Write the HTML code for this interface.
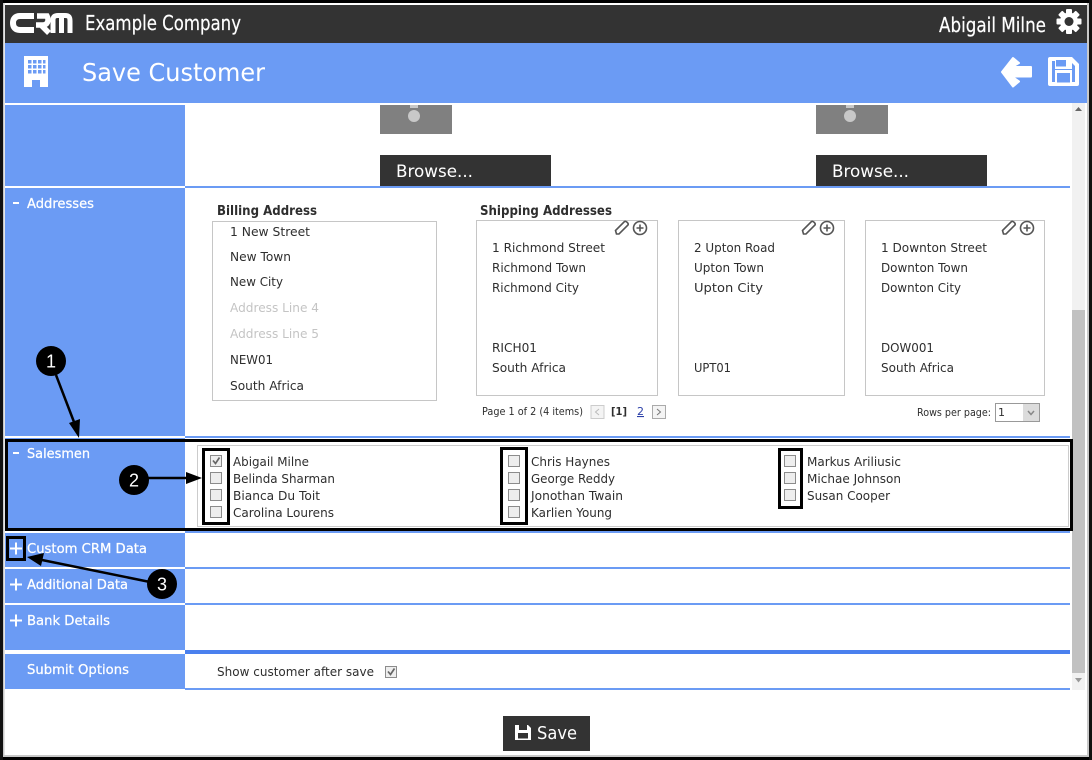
<!DOCTYPE html>
<html lang="en"><head><meta charset="utf-8"><title>Save Customer</title>
<style>
html,body{margin:0;padding:0;background:#fff;width:1092px;height:760px;overflow:hidden}
svg{position:absolute;left:0;top:0;display:block}
text{font-family:"DejaVu Sans","Liberation Sans",sans-serif;font-size:12px;fill:#2e2e2e}
.s text{fill:#fff;font-size:13px;stroke:#fff;stroke-width:.25px}
</style></head><body>
<svg width="1092" height="760" viewBox="0 0 1092 760" xmlns="http://www.w3.org/2000/svg">
<!-- frame -->
<rect width="1092" height="760" fill="#fff"/>
<rect x="0" y="0" width="1092" height="3" fill="#000"/>
<rect x="0" y="757" width="1092" height="3" fill="#000"/>
<rect x="0" y="0" width="3" height="760" fill="#111"/>
<rect x="3" y="3" width="1.500" height="754" fill="#c8c8c8"/>
<rect x="1089" y="0" width="3" height="760" fill="#111"/>
<rect x="1087" y="3" width="2" height="754" fill="#c8c8c8"/>
<rect x="3" y="755" width="1086" height="2" fill="#c8c8c8"/>
<!-- header -->
<rect x="5" y="5" width="1082" height="38" fill="#333"/>
<rect x="5" y="43" width="1082" height="60" fill="#6b9bf4"/>
<g fill="none" stroke="#fff" stroke-width="6">
<path d="M34 16H20C15 16 13 19 13 23C13 27 15 30 20 30H34"/>
<path d="M37 16H47C49.500 21 47 25 43 25H36M41 25L49 33" stroke-width="5.500"/>
<path d="M53 33V20C53 16.500 55 15.500 58 15.500H65C69 15.500 70 17 70 21V33M61.500 16V33" stroke-width="5"/>
</g>
<text x="85" y="30" style="font-size:20.500px;fill:#fff;stroke:#fff;stroke-width:.2px" textLength="156" lengthAdjust="spacingAndGlyphs">Example Company</text>
<text x="939" y="32" style="font-size:20.500px;fill:#fff;stroke:#fff;stroke-width:.2px" textLength="107" lengthAdjust="spacingAndGlyphs">Abigail Milne</text>
<!-- gear -->
<g transform="translate(1069 21.500)" fill="#fff">
<circle r="9"/>
<rect x="-3" y="-12.500" width="6" height="25" rx="1"/>
<rect x="-3" y="-12.500" width="6" height="25" rx="1" transform="rotate(45)"/>
<rect x="-3" y="-12.500" width="6" height="25" rx="1" transform="rotate(90)"/>
<rect x="-3" y="-12.500" width="6" height="25" rx="1" transform="rotate(135)"/>
<circle r="4.500" fill="#333"/>
</g>
<!-- building -->
<path fill="#fff" d="M24 56H48V87H40V80H32V87H24Z"/>
<g fill="#6b9bf4">
<rect x="28" y="60" width="3.500" height="3.500"/><rect x="33" y="60" width="3.500" height="3.500"/><rect x="38" y="60" width="3.500" height="3.500"/><rect x="43" y="60" width="2.500" height="3.500"/>
<rect x="28" y="65" width="3.500" height="3.500"/><rect x="33" y="65" width="3.500" height="3.500"/><rect x="38" y="65" width="3.500" height="3.500"/><rect x="43" y="65" width="2.500" height="3.500"/>
<rect x="28" y="70" width="3.500" height="3.500"/><rect x="33" y="70" width="3.500" height="3.500"/><rect x="38" y="70" width="3.500" height="3.500"/><rect x="43" y="70" width="2.500" height="3.500"/>
</g>
<text x="82" y="81" style="font-size:25px;fill:#fff" textLength="183" lengthAdjust="spacingAndGlyphs">Save Customer</text>
<!-- back arrow -->
<path fill="#fff" stroke="#fff" stroke-width="2" stroke-linejoin="round" d="M1002 72L1013 58L1019 63L1012 67H1031V76.500H1012L1019 81.500L1013 86.500Z"/>
<!-- save icon -->
<path fill="#fff" d="M1050 57H1072L1079 64V84Q1079 86 1077 86H1050Q1048 86 1048 84V59Q1048 57 1050 57Z"/>
<path fill="#6b9bf4" d="M1052 61H1070L1075 66V82H1052Z"/>
<path fill="#fff" d="M1055 57H1072V69H1055Z"/>
<path fill="#6b9bf4" d="M1056 60H1066V66.500H1056Z"/>
<rect x="1055" y="70" width="17" height="16" fill="#fff"/>
<rect x="1057" y="73" width="13" height="9.500" fill="#6b9bf4"/>
<!-- sidebar -->
<g fill="#6b9bf4">
<rect x="5" y="105" width="180" height="81"/>
<rect x="5" y="188" width="180" height="248"/>
<rect x="5" y="438" width="180" height="93"/>
<rect x="5" y="533" width="180" height="34"/>
<rect x="5" y="569" width="180" height="34"/>
<rect x="5" y="605" width="180" height="45"/>
<rect x="5" y="654" width="180" height="35"/>
<rect x="185" y="186" width="885" height="2"/>
<rect x="185" y="436" width="885" height="2"/>
<rect x="185" y="531" width="885" height="2"/>
<rect x="185" y="567" width="885" height="2"/>
<rect x="185" y="603" width="885" height="2"/>
<rect x="185" y="688" width="885" height="2"/>
</g>
<rect x="185" y="650" width="885" height="4" fill="#4a80ee"/>
<!-- scrollbar -->
<rect x="1072" y="103" width="13" height="587" fill="#f1f1f1"/>
<rect x="1072" y="310" width="13" height="363" fill="#c1c1c1"/>
<path d="M1075 111L1078.500 107L1082 111Z" fill="#666"/>
<path d="M1075 678L1078.500 682.500L1082 678Z" fill="#999"/>
<!-- sidebar text -->
<g class="s">
<text x="27" y="208" textLength="67" lengthAdjust="spacingAndGlyphs">Addresses</text>
<text x="27" y="458" textLength="63" lengthAdjust="spacingAndGlyphs">Salesmen</text>
<text x="27" y="553" textLength="120" lengthAdjust="spacingAndGlyphs">Custom CRM Data</text>
<text x="27" y="589" textLength="101" lengthAdjust="spacingAndGlyphs">Additional Data</text>
<text x="27" y="625" textLength="83" lengthAdjust="spacingAndGlyphs">Bank Details</text>
<text x="27" y="674" textLength="102" lengthAdjust="spacingAndGlyphs">Submit Options</text>
</g>
<g fill="#fff">
<rect x="13" y="202" width="6" height="2"/><rect x="13" y="452" width="6" height="2"/>
<path d="M15 542.500h2v5h5v2h-5v5h-2v-5h-5v-2h5z"/>
<path d="M15 578.500h2v5h5v2h-5v5h-2v-5h-5v-2h5z"/>
<path d="M15 614.500h2v5h5v2h-5v5h-2v-5h-5v-2h5z"/>
</g>
<!-- photo placeholders -->
<g fill="#808080"><rect x="380" y="105" width="72" height="29"/><rect x="816" y="105" width="72" height="29"/></g>
<g fill="#c8c8c8"><circle cx="414" cy="116" r="6"/><rect x="410" y="105" width="8" height="3"/><circle cx="850" cy="116" r="6"/><rect x="846" y="105" width="8" height="3"/></g>
<g fill="#333"><rect x="380" y="155" width="171" height="31"/><rect x="816" y="155" width="171" height="31"/></g>
<text x="396" y="177" style="font-size:17px;fill:#fff" textLength="77" lengthAdjust="spacingAndGlyphs">Browse...</text>
<text x="832" y="177" style="font-size:17px;fill:#fff" textLength="77" lengthAdjust="spacingAndGlyphs">Browse...</text>
<!-- addresses -->
<text x="217" y="215" style="font-weight:bold;font-size:13px" textLength="100" lengthAdjust="spacingAndGlyphs">Billing Address</text>
<text x="480" y="215" style="font-weight:bold;font-size:13px" textLength="132" lengthAdjust="spacingAndGlyphs">Shipping Addresses</text>
<g fill="#fff" stroke="#c6c6c6">
<rect x="212.500" y="221.500" width="224" height="179"/>
<rect x="476.500" y="220.500" width="181" height="175"/>
<rect x="678.500" y="220.500" width="166" height="175"/>
<rect x="865.500" y="220.500" width="179" height="175"/>
</g>
<text x="230" y="236" textLength="80" lengthAdjust="spacingAndGlyphs">1 New Street</text>
<text x="230" y="261" textLength="61" lengthAdjust="spacingAndGlyphs">New Town</text>
<text x="230" y="286" textLength="53" lengthAdjust="spacingAndGlyphs">New City</text>
<text x="230" y="312" style="fill:#c4c4c4" textLength="89" lengthAdjust="spacingAndGlyphs">Address Line 4</text>
<text x="230" y="338" style="fill:#c4c4c4" textLength="89" lengthAdjust="spacingAndGlyphs">Address Line 5</text>
<text x="230" y="364" textLength="43" lengthAdjust="spacingAndGlyphs">NEW01</text>
<text x="230" y="390" textLength="74" lengthAdjust="spacingAndGlyphs">South Africa</text>

<text x="492" y="252" textLength="113" lengthAdjust="spacingAndGlyphs">1 Richmond Street</text>
<text x="492" y="272" textLength="94" lengthAdjust="spacingAndGlyphs">Richmond Town</text>
<text x="492" y="292" textLength="87" lengthAdjust="spacingAndGlyphs">Richmond City</text>
<text x="492" y="352" textLength="45" lengthAdjust="spacingAndGlyphs">RICH01</text>
<text x="492" y="372" textLength="74" lengthAdjust="spacingAndGlyphs">South Africa</text>

<text x="694" y="252" textLength="81" lengthAdjust="spacingAndGlyphs">2 Upton Road</text>
<text x="694" y="272" textLength="70" lengthAdjust="spacingAndGlyphs">Upton Town</text>
<text x="694" y="292" textLength="69" lengthAdjust="spacingAndGlyphs">Upton City</text>
<text x="694" y="372" textLength="37" lengthAdjust="spacingAndGlyphs">UPT01</text>

<text x="881" y="252" textLength="106" lengthAdjust="spacingAndGlyphs">1 Downton Street</text>
<text x="881" y="272" textLength="87" lengthAdjust="spacingAndGlyphs">Downton Town</text>
<text x="881" y="292" textLength="80" lengthAdjust="spacingAndGlyphs">Downton City</text>
<text x="881" y="352" textLength="53" lengthAdjust="spacingAndGlyphs">DOW001</text>
<text x="881" y="372" textLength="73" lengthAdjust="spacingAndGlyphs">South Africa</text>

<!-- edit / add icons -->
<g fill="none" stroke="#555" stroke-width="1.600">
<path d="M616.500 234L615.500 230.500L624.500 221.500C626 220.500 629 223.500 628 225L619 234Z"/>
<circle cx="640" cy="228" r="6.500"/><path d="M640 224.500V231.500M636.500 228H643.500"/>
<path d="M803.500 234L802.500 230.500L811.500 221.500C813 220.500 816 223.500 815 225L806 234Z"/>
<circle cx="827" cy="228" r="6.500"/><path d="M827 224.500V231.500M823.500 228H830.500"/>
<path d="M1003.500 234L1002.500 230.500L1011.500 221.500C1013 220.500 1016 223.500 1015 225L1006 234Z"/>
<circle cx="1027" cy="228" r="6.500"/><path d="M1027 224.500V231.500M1023.500 228H1030.500"/>
</g>
<!-- pager -->
<text x="482" y="415" style="font-size:11px" textLength="101" lengthAdjust="spacingAndGlyphs">Page 1 of 2 (4 items)</text>
<rect x="591" y="405.500" width="13" height="13" fill="#f4f4f4" stroke="#ccc"/>
<path d="M599 409L595.500 412L599 415" fill="none" stroke="#bbb"/>
<text x="611" y="415" style="font-size:11px;font-weight:bold" textLength="16" lengthAdjust="spacingAndGlyphs">[1]</text>
<text x="637" y="415" style="font-size:11px;fill:#2b3fa8;text-decoration:underline" textLength="7" lengthAdjust="spacingAndGlyphs">2</text>
<rect x="652.500" y="405.500" width="13" height="13" fill="#f4f4f4" stroke="#aaa"/>
<path d="M657 409L660.500 412L657 415" fill="none" stroke="#777"/>
<text x="917" y="416" style="font-size:11px" textLength="74" lengthAdjust="spacingAndGlyphs">Rows per page:</text>
<rect x="995.500" y="403.500" width="44" height="18" fill="#fff" stroke="#999"/>
<text x="998" y="416" style="font-size:11px">1</text>
<rect x="1023" y="404" width="16" height="17" fill="#dcdcdc"/>
<path d="M1028 411L1031 414.500L1034 411" fill="none" stroke="#888" stroke-width="1.500"/>
<!-- salesmen panel -->
<rect x="197.500" y="445.500" width="871" height="81" fill="#fff" stroke="#ccc"/>
<g fill="#eeeeee" stroke="#8c8c8c">
<rect x="210.500" y="455.500" width="11" height="11"/><rect x="210.500" y="472.500" width="11" height="11"/><rect x="210.500" y="489.500" width="11" height="11"/><rect x="210.500" y="506.500" width="11" height="11"/>
<rect x="508.500" y="455.500" width="11" height="11"/><rect x="508.500" y="472.500" width="11" height="11"/><rect x="508.500" y="489.500" width="11" height="11"/><rect x="508.500" y="506.500" width="11" height="11"/>
<rect x="784.500" y="455.500" width="11" height="11"/><rect x="784.500" y="472.500" width="11" height="11"/><rect x="784.500" y="489.500" width="11" height="11"/>
<rect x="385.500" y="666.500" width="11" height="11"/>
</g>
<g fill="none" stroke="#666" stroke-width="1.700">
<path d="M213 460.500L215.500 463.500L219.500 457.500"/>
<path d="M388 671.500L390.500 674.500L394.500 668.500"/>
</g>
<text x="233" y="466" textLength="76" lengthAdjust="spacingAndGlyphs">Abigail Milne</text>
<text x="233" y="483" textLength="102" lengthAdjust="spacingAndGlyphs">Belinda Sharman</text>
<text x="233" y="500" textLength="87" lengthAdjust="spacingAndGlyphs">Bianca Du Toit</text>
<text x="233" y="517" textLength="101" lengthAdjust="spacingAndGlyphs">Carolina Lourens</text>
<text x="531" y="466" textLength="79" lengthAdjust="spacingAndGlyphs">Chris Haynes</text>
<text x="531" y="483" textLength="84" lengthAdjust="spacingAndGlyphs">George Reddy</text>
<text x="531" y="500" textLength="92" lengthAdjust="spacingAndGlyphs">Jonothan Twain</text>
<text x="531" y="517" textLength="81" lengthAdjust="spacingAndGlyphs">Karlien Young</text>
<text x="807" y="466" textLength="94" lengthAdjust="spacingAndGlyphs">Markus Ariliusic</text>
<text x="807" y="483" textLength="94" lengthAdjust="spacingAndGlyphs">Michae Johnson</text>
<text x="807" y="500" textLength="83" lengthAdjust="spacingAndGlyphs">Susan Cooper</text>
<text x="217" y="676" textLength="157" lengthAdjust="spacingAndGlyphs">Show customer after save</text>
<!-- save button -->
<rect x="503" y="716" width="87" height="35" fill="#333"/>
<path fill="#fff" d="M515 725H528L531 728V740H515Z"/>
<rect x="519" y="725" width="8" height="5" fill="#333"/>
<rect x="518" y="733" width="10" height="5.500" fill="#333"/>
<text x="537" y="739" style="font-size:18px;fill:#fff" textLength="40" lengthAdjust="spacingAndGlyphs">Save</text>
<!-- annotations -->
<g fill="none" stroke="#000" stroke-width="3">
<rect x="6.500" y="440.500" width="1065" height="89"/>
<rect x="203.500" y="449.500" width="25" height="74"/>
<rect x="501.500" y="448.500" width="25" height="75"/>
<rect x="779.500" y="449.500" width="22" height="58"/>
<rect x="7.500" y="537.500" width="17" height="22"/>
</g>
<g stroke="#000" stroke-width="2.500" fill="#000">
<path d="M56 375L74 422" fill="none"/>
<path d="M79 438L69 423L80 419Z" stroke="none"/>
<path d="M148 478H186" fill="none"/>
<path d="M202 478L186 472V484Z" stroke="none"/>
<path d="M150 582L42 560" fill="none"/>
<path d="M27 557L44 553L41 566Z" stroke="none"/>
</g>
<g fill="#000"><circle cx="51" cy="361" r="15"/><circle cx="134" cy="480" r="15"/><circle cx="162" cy="584" r="15"/></g>
<text x="51" y="367.500" text-anchor="middle" style="font-size:18px;fill:#fff;font-family:'Liberation Sans',sans-serif">1</text>
<text x="134" y="486.500" text-anchor="middle" style="font-size:18px;fill:#fff;font-family:'Liberation Sans',sans-serif">2</text>
<text x="162" y="590.500" text-anchor="middle" style="font-size:18px;fill:#fff;font-family:'Liberation Sans',sans-serif">3</text>
</svg>
</body></html>
